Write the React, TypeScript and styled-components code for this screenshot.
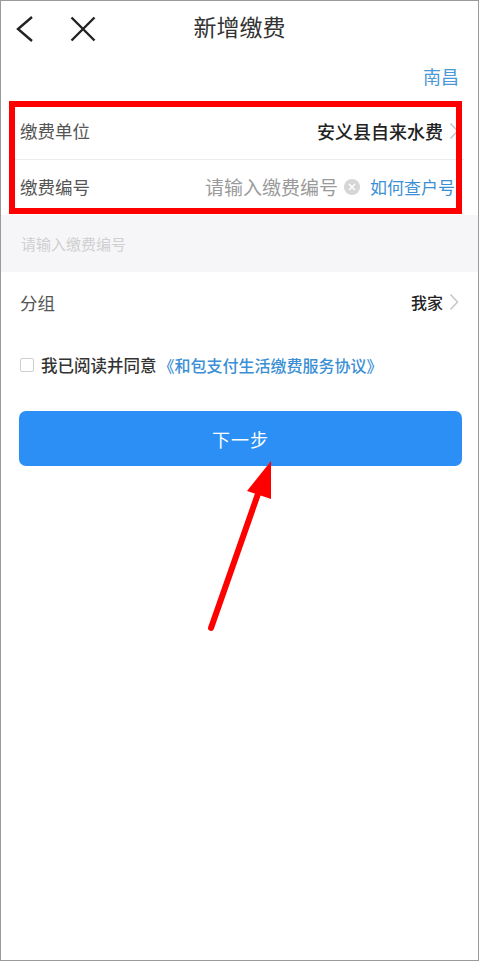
import React from "react";
import styled, { createGlobalStyle } from "styled-components";

const GlobalStyle = createGlobalStyle`
    html, body {
        margin: 0;
        padding: 0;
        background: #fff;
    }
    body {
        font-family: "Noto Sans CJK SC", "Noto Sans", sans-serif;
    }
`

const Frame = styled.div`
    position: relative;
    box-sizing: border-box;
    width: 479px;
    height: 961px;
    border: 1px solid #9a9a9a;
    background: #fff;
    overflow: hidden;
`

const Header = styled.header`
    position: relative;
    height: 50px;
    display: flex;
    align-items: center;
    justify-content: center;
`

const HeaderIcons = styled.div`
    position: absolute;
    left: 14px;
    top: 14px;
    display: flex;
    align-items: center;
    gap: 35px;
`

const Title = styled.h1`
    margin: 0;
    font-size: 23px;
    font-weight: 400;
    color: #333;
`

const CityRow = styled.div`
    height: 50px;
    display: flex;
    align-items: center;
    justify-content: flex-end;
    padding-right: 19px;
    font-size: 18px;
    color: #4a98d6;
`

const Section = styled.section`
    position: relative;
    margin-top: 1px;
`

const Highlight = styled.div`
    position: absolute;
    left: 8px;
    right: 16px;
    top: -1px;
    height: 113px;
    border: 6px solid #ff0000;
    box-sizing: border-box;
    pointer-events: none;
`

const Row = styled.div<{ $h: number; $line?: boolean }>`
    height: ${(p) => p.$h}px;
    display: flex;
    align-items: center;
    justify-content: space-between;
    border-bottom: ${(p) => (p.$line ? "1px solid #ececec" : "none")};
    margin: 0 ${(p) => (p.$line ? "14px" : "0")};
    padding: 0 ${(p) => (p.$line ? "5px" : "19px")};
`

const Label = styled.span`
    font-size: 17.5px;
    color: #555;
`

const Value = styled.span<{ $size?: number }>`
    font-size: ${(p) => p.$size ?? 17.5}px;
    font-weight: 500;
    color: #222;
`

const Right = styled.div`
    display: flex;
    align-items: center;
    gap: 6px;
    white-space: nowrap;
`

const Placeholder = styled.span`
    font-size: 19px;
    color: #9a9a9a;
`

const ClearDot = styled.span`
    width: 16px;
    height: 16px;
    border-radius: 50%;
    background: #d6d6d6;
    margin-right: 4px;
    display: inline-flex;
    align-items: center;
    justify-content: center;
`

const HelpLink = styled.span`
    font-size: 17px;
    color: #3b8fd4;
    margin-right: 4px;
`

const HintBand = styled.div`
    height: 57px;
    margin-top: 2px;
    background: #f6f6f8;
    display: flex;
    align-items: center;
    padding-left: 20px;
    font-size: 15px;
    color: #cfcfcf;
`

const AgreeRow = styled.label`
    display: flex;
    align-items: center;
    height: 64px;
    padding-left: 19px;
    margin-top: 1px;
`

const CheckBox = styled.span`
    width: 12px;
    height: 12px;
    border: 1px solid #cfcfcf;
    border-radius: 2px;
    margin-right: 7px;
`

const AgreeText = styled.span`
    font-size: 16.5px;
    color: #333;
    font-weight: 500;
`

const AgreeLink = styled.span`
    font-size: 16px;
    color: #3b8fd4;
    font-weight: 500;
    margin-left: 2px;
`

const NextButton = styled.button`
    display: flex;
    align-items: center;
    justify-content: center;
    margin: 14px 0 0 18px;
    width: 443px;
    height: 55px;
    border: none;
    border-radius: 7px;
    background: #2b8ff6;
    color: #fff;
    font-family: inherit;
    font-size: 18px;
    letter-spacing: 1px;
`

const Arrow = styled.svg`
    position: absolute;
    left: 0;
    top: 0;
    pointer-events: none;
`

const Chevron = ({ color = "#c8c8c8" }: { color?: string }) => (
    <svg width="10" height="18" viewBox="0 0 10 18">
        <path d="M1.5 1.5 L8.5 9 L1.5 16.5" fill="none" stroke={color} strokeWidth="1.6" />
    </svg>
)

function App() {
    return (
        <>
            <GlobalStyle />
            <Frame>
                <Header>
                    <HeaderIcons>
                        <svg width="20" height="28" viewBox="0 0 20 28">
                            <path d="M17 2 L3 14 L17 26" fill="none" stroke="#222" strokeWidth="2.4" />
                        </svg>
                        <svg width="26" height="26" viewBox="0 0 26 26">
                            <path d="M1.5 1.5 L24.5 24.5 M24.5 1.5 L1.5 24.5" fill="none" stroke="#222" strokeWidth="2.4" />
                        </svg>
                    </HeaderIcons>
                    <Title>新增缴费</Title>
                </Header>

                <CityRow>南昌</CityRow>

                <Section>
                    <Row $h={57} $line>
                        <Label>缴费单位</Label>
                        <Right>
                            <Value $size={18}>安义县自来水费</Value>
                            <Chevron />
                        </Right>
                    </Row>
                    <Row $h={53}>
                        <Label>缴费编号</Label>
                        <Right>
                            <Placeholder>请输入缴费编号</Placeholder>
                            <ClearDot>
                                <svg width="8" height="8" viewBox="0 0 8 8">
                                    <path d="M1 1 L7 7 M7 1 L1 7" stroke="#fff" strokeWidth="1.5" />
                                </svg>
                            </ClearDot>
                            <HelpLink>如何查户号</HelpLink>
                        </Right>
                    </Row>
                    <Highlight />
                </Section>

                <HintBand>请输入缴费编号</HintBand>

                <Row $h={60}>
                    <Label>分组</Label>
                    <Right>
                        <Value $size={16}>我家</Value>
                        <Chevron />
                    </Right>
                </Row>

                <AgreeRow>
                    <CheckBox />
                    <AgreeText>我已阅读并同意</AgreeText>
                    <AgreeLink>《和包支付生活缴费服务协议》</AgreeLink>
                </AgreeRow>

                <NextButton>下一步</NextButton>

                <Arrow width="480" height="961" viewBox="0 0 480 961">
                    <line x1="210" y1="627" x2="258" y2="490" stroke="#ff0000" strokeWidth="6" strokeLinecap="round" />
                    <polygon points="270,460 246,490 270,498" fill="#ff0000" />
                </Arrow>
            </Frame>
        </>
    )
}

export default App
